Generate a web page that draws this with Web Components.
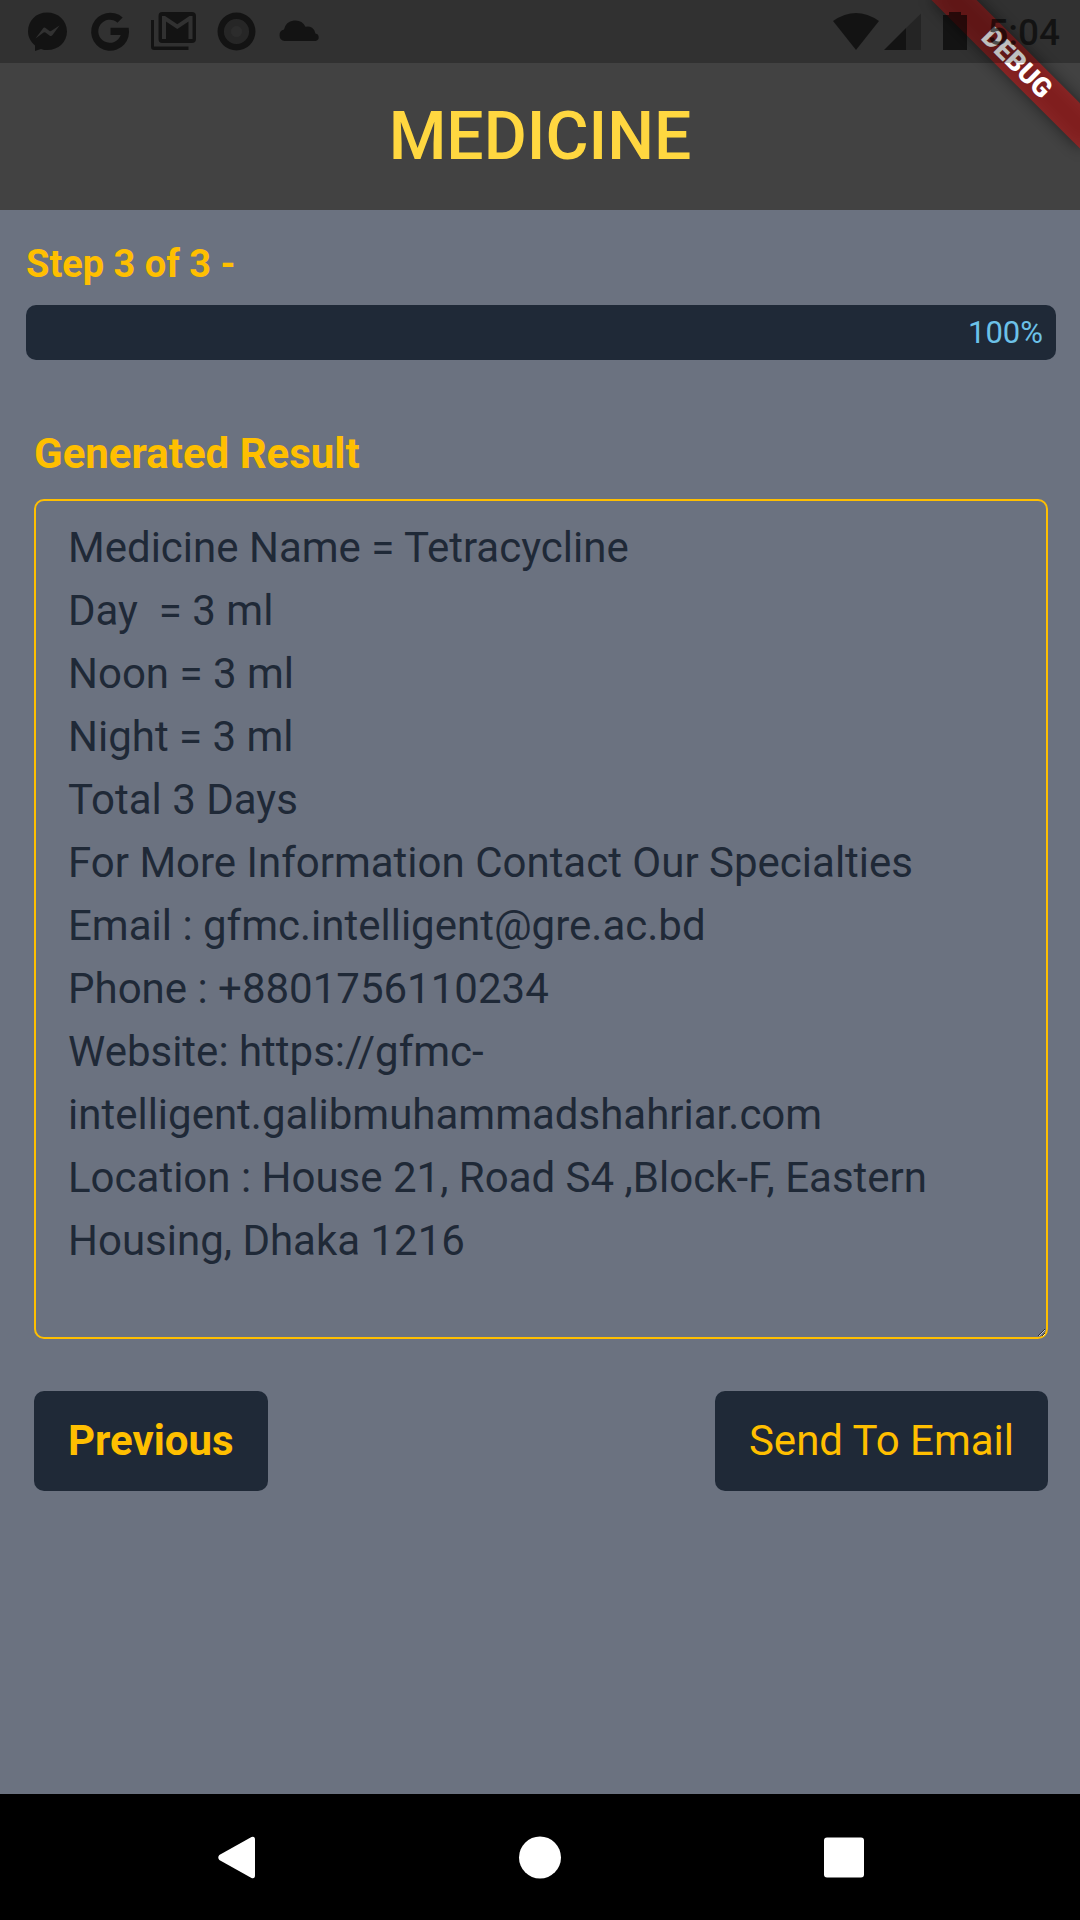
<!DOCTYPE html>
<html lang="en">
<head>
<meta charset="utf-8">
<meta name="viewport" content="width=device-width, initial-scale=1">
<title>Medicine</title>
<style>
  html, body { margin: 0; }
  body { font-family: Roboto, "Noto Sans", sans-serif; background: #6b7280; }
</style>
</head>
<body>
<app-shell>
  <status-bar slot="status" time="5:04"></status-bar>
  <app-header slot="header">MEDICINE</app-header>
  <debug-banner slot="banner">DEBUG</debug-banner>
  <step-progress label="Step 3 of 3 -" value="100"></step-progress>
  <result-form heading="Generated Result">Medicine Name = Tetracycline
Day  = 3 ml
Noon = 3 ml
Night = 3 ml
Total 3 Days
For More Information Contact Our Specialties
Email : gfmc.intelligent@gre.ac.bd
Phone : +8801756110234
Website: https://gfmc-intelligent.galibmuhammadshahriar.com
Location : House 21, Road S4 ,Block-F, Eastern Housing, Dhaka 1216</result-form>
  <action-row>
    <action-button strong>Previous</action-button>
    <action-button>Send To Email</action-button>
  </action-row>
  <system-nav slot="nav"></system-nav>
</app-shell>

<script>
  const define = (name, html, setup) => {
    const template = document.createElement('template');
    template.innerHTML = html;
    customElements.define(name, class extends HTMLElement {
      constructor() {
        super();
        this.attachShadow({ mode: 'open' }).append(template.content.cloneNode(true));
      }
      connectedCallback() {
        if (setup) setup(this, this.shadowRoot);
      }
    });
  };

  define('app-shell', `
    <style>
      :host { display: flex; flex-direction: column; min-height: 100vh; position: relative; }
      .top { display: grid; background: #424242; }
      main { flex: 1; display: flex; flex-direction: column; }
      slot[name="status"] { display: block; position: relative; z-index: 2; }
    </style>
    <div class="top">
      <slot name="status"></slot>
      <slot name="header"></slot>
    </div>
    <slot name="banner"></slot>
    <main><slot></slot></main>
    <slot name="nav"></slot>`);

  define('status-bar', `
    <style>
      :host { display: block; background: rgba(0, 0, 0, .25); color: rgba(0, 0, 0, .6); }
      .bar { display: flex; justify-content: space-between; align-items: center; height: 63px; padding: 0 20px 0 16px; }
      .group { display: flex; align-items: center; }
      svg { display: block; fill: currentColor; }
      time { font-size: 37px; font-weight: 500; line-height: 40px; padding: 2px 0 0 19px; }
    </style>
    <div class="bar">
      <div class="group">
        <svg width="63" height="63" viewBox="0 0 63 63"><path fill-rule="evenodd" d="M31 12.500C20 12.500 12 20.500 12 31.500C12 37 14.500 41.500 19 45.500L19 51L25 49C27 50 29 50 31.500 50C42.500 50 51 42 51 31.500C51 20.500 42.500 12.500 31 12.500ZM19.500 38.500L27 28.500Q28 27 29.500 28L33.500 31Q34.500 31.500 35.500 30.800L43.500 25.500L36.500 35Q35.200 36.800 33.500 35.500L29.500 32.500Q28.500 32 27.500 32.600Z"/></svg>
        <svg width="63" height="63" viewBox="0 0 63 63"><path d="M43.700 17.500A19 19 0 1 0 49.700 27.800H31.500V35H41.700A11.500 11.500 0 1 1 38.500 22.700Z"/></svg>
        <svg width="63" height="63" viewBox="0 0 63 63"><path d="M9 20H12V46.500H46.500V50H12Q9 50 9 47Z"/><path fill-rule="evenodd" d="M20 12H50Q54 12 54 16V39Q54 43 50 43H20Q16.500 43 16.500 39V16Q16.500 12 20 12ZM20 39H24V21.500L35.300 29L46.500 21.500V39H50.500V16H47.500L35.300 24.300L23 16H20Z"/></svg>
        <svg width="63" height="63" viewBox="0 0 63 63"><path fill-rule="evenodd" d="M31.500 12.500a19 19 0 1 1 0 38a19 19 0 1 1 0-38ZM31.500 19a12.500 12.500 0 1 0 0 25a12.500 12.500 0 1 0 0-25Z"/><circle cx="31.500" cy="31.500" r="12.500" opacity=".35"/><circle cx="31.500" cy="31.500" r="5.500" fill="#fff" opacity=".03"/></svg>
        <svg width="63" height="63" viewBox="0 0 63 63"><path d="M16.500 41A5.800 5.800 0 0 1 16 29.600A11.500 11.500 0 0 1 37.500 26.700A8 8 0 0 1 47.500 33.600A3.800 3.800 0 0 1 48 41Z"/></svg>
      </div>
      <div class="group">
        <svg width="140" height="63" viewBox="0 0 140 63"><path d="M5 21Q28 5 51 21L28 50Z"/><path d="M56 50L78 28V50Z"/><path opacity=".42" d="M78 28L93 13.500V50H78Z"/><path d="M115 15H121V12H133V15H139V50H115Z"/></svg>
        <time></time>
      </div>
    </div>`, (host, root) => {
      root.querySelector('time').textContent = host.getAttribute('time');
    });

  define('app-header', `
    <style>
      :host { display: block; text-align: center; }
      h1 { margin: 0; padding: 36px 16px; font-size: 66px; line-height: 75px; font-weight: 500; color: #ffd740; }
    </style>
    <h1><slot></slot></h1>`);

  define('debug-banner', `
    <style>
      :host { position: absolute; top: 0; right: 0; width: 126px; height: 180px; z-index: 1; pointer-events: none; clip-path: inset(0 0 0 -60px); }
      .ribbon { position: absolute; top: 47px; left: -42px; width: 210px; height: 32px; transform: rotate(45deg);
        display: flex; align-items: center; justify-content: center; color: #fff; font-size: 27px; line-height: 32px; font-weight: 900; }
      .ribbon::before { content: ""; position: absolute; inset: 0; z-index: -2; background: rgba(0, 0, 0, .5); filter: blur(8px); }
      .ribbon::after { content: ""; position: absolute; inset: 0; z-index: -1; background: rgba(183, 28, 28, .63); }
    </style>
    <div class="ribbon"><slot></slot></div>`);

  define('step-progress', `
    <style>
      :host { display: block; padding: 33px 24px 0 26px; }
      .label { font-size: 38px; line-height: 42px; font-weight: 700; color: #ffbf00; }
      .track { margin-top: 20px; border-radius: 10px; background: #1f2937; }
      .fill { box-sizing: border-box; padding: 0 13px; font-size: 31px; line-height: 55px; text-align: right; color: #6cc1e8; }
    </style>
    <div class="label" id="label"></div>
    <div class="track" role="progressbar" aria-labelledby="label"><div class="fill"></div></div>`, (host, root) => {
      const value = host.getAttribute('value');
      root.querySelector('.label').textContent = host.getAttribute('label');
      root.querySelector('.track').setAttribute('aria-valuenow', value);
      const fill = root.querySelector('.fill');
      fill.style.width = value + '%';
      fill.textContent = value + '%';
    });

  define('result-form', `
    <style>
      :host { display: block; padding: 62px 32px 0 34px; }
      label { display: block; font-size: 42px; line-height: 63px; font-weight: 700; color: #ffbf00; }
      textarea { display: block; box-sizing: border-box; width: 100%; height: 840px; margin: 14px 0 0; padding: 15px 32px;
        border: 2px solid #ffbf00; border-radius: 10px; background: transparent; color: #1f2937;
        font: 400 42px/63px Roboto, "Noto Sans", sans-serif; outline: none; overflow: auto; }
    </style>
    <label for="result"></label>
    <textarea id="result" spellcheck="false"></textarea>`, (host, root) => {
      root.querySelector('label').textContent = host.getAttribute('heading');
      root.querySelector('textarea').value = host.textContent;
    });

  define('action-row', `
    <style>
      :host { display: flex; justify-content: space-between; padding: 52px 32px 52px 34px; }
    </style>
    <slot></slot>`);

  define('action-button', `
    <style>
      :host { display: block; }
      button { display: block; border: 0; border-radius: 10px; padding: 18px 34px; background: #1f2937; color: #ffbf00;
        font: 400 42px/64px Roboto, "Noto Sans", sans-serif; cursor: pointer; }
      :host([strong]) button { font-weight: 700; }
    </style>
    <button type="button"><slot></slot></button>`);

  define('system-nav', `
    <style>
      :host { display: block; background: #000; }
      nav { display: flex; justify-content: center; gap: 241px; height: 126px; align-items: center; }
      button { border: 0; padding: 0; background: none; color: #fff; }
      svg { display: block; fill: currentColor; }
    </style>
    <nav aria-label="System">
      <button type="button" aria-label="Back"><svg width="63" height="63" viewBox="0 0 63 63"><path d="M14.300 29L46.500 11Q50 9.800 50 14V49Q50 53.200 46.500 52L14.300 34Q12.200 31.500 14.300 29Z"/></svg></button>
      <button type="button" aria-label="Home"><svg width="63" height="63" viewBox="0 0 63 63"><circle cx="31" cy="31.500" r="21"/></svg></button>
      <button type="button" aria-label="Recent apps"><svg width="63" height="63" viewBox="0 0 63 63"><rect x="11" y="11.500" width="40" height="40" rx="3"/></svg></button>
    </nav>`);
</script>
</body>
</html>
